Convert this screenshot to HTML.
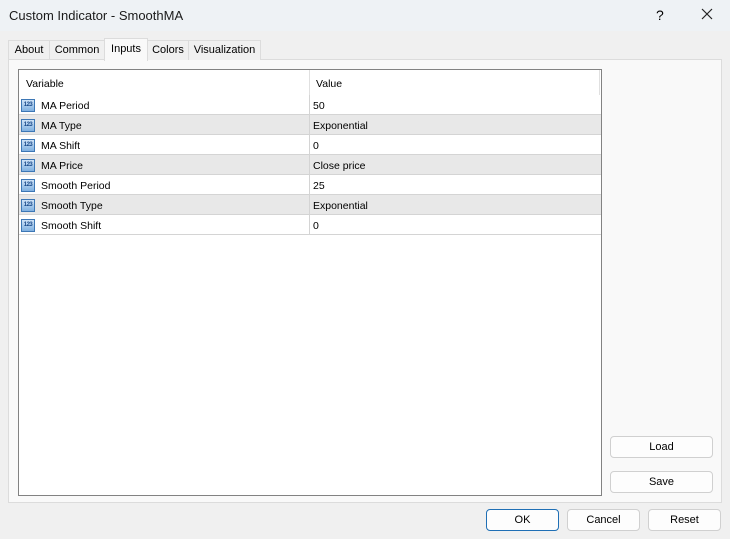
<!DOCTYPE html>
<html><head><style>
body{margin:0;width:730px;height:539px;background:#f0f0f0;font-family:"Liberation Sans",Arial,sans-serif;font-size:11px;color:#000;position:relative;overflow:hidden}
.title{position:absolute;left:0;top:0;width:730px;height:31px;background:#eef2f5;}
.title span{position:absolute;left:9px;top:8px;font-size:13px;color:#1a1a1a}
.q{position:absolute;left:656px;top:7px;font-size:14px}
.x{position:absolute;left:700px;top:7px}
.tab{position:absolute;top:40px;height:19px;background:#f0f0f0;border:1px solid #dcdcdc;border-bottom:none;line-height:19px;text-align:center;font-size:11px}
.panel{position:absolute;left:8px;top:59px;width:714px;height:444px;background:#f9f9f9;border:1px solid #dcdcdc;box-sizing:border-box}
.grid{position:absolute;left:18px;top:69px;width:584px;height:427px;background:#fff;border:1px solid #828282;box-sizing:border-box;font-size:10.5px}
.row{position:absolute;left:0;width:582px;height:20px;border-bottom:1px solid #d4d4d4;box-sizing:border-box}
.row.g{background:#e8e8e8}
.row .n{position:absolute;left:22px;top:5px}
.row .v{position:absolute;left:294px;top:5px}
.row .d{position:absolute;left:290px;top:0;width:1px;height:20px;background:#d4d4d4}
.ic{position:absolute;left:2px;top:4px;width:14px;height:13px;background:linear-gradient(#cfe3f7,#7fb0e0);border:1px solid #3d77b5;box-sizing:border-box;font-size:6px;font-weight:bold;color:#1a4a8a;line-height:11px;text-align:center;letter-spacing:-0.5px}
.btn{position:absolute;height:22px;background:#fdfdfd;border:1px solid #d0d0d0;border-radius:4px;box-sizing:border-box;text-align:center;line-height:21px;font-size:11px}
</style></head><body>
<div class="title"><span>Custom Indicator - SmoothMA</span><div class="q">?</div>
<svg class="x" width="14" height="14" viewBox="0 0 14 14"><path d="M2 2L12 12M12 2L2 12" stroke="#222" stroke-width="1.2"/></svg></div>
<div class="tab" style="left:8px;width:40px">About</div>
<div class="tab" style="left:49px;width:54px">Common</div>
<div class="panel"></div>
<div class="tab" style="left:104px;width:42px;top:38px;height:22px;background:#f9f9f9;line-height:20px">Inputs</div>
<div class="tab" style="left:147px;width:40px">Colors</div>
<div class="tab" style="left:188px;width:71px">Visualization</div>
<div class="grid">
<div class="row" style="top:0;height:25px;border-bottom:none"><span style="position:absolute;left:7px;top:8px">Variable</span><div style="position:absolute;left:290px;top:0;width:1px;height:25px;background:#e0e0e0"></div><span style="position:absolute;left:297px;top:8px">Value</span><div style="position:absolute;left:580px;top:0;width:1px;height:25px;background:#e0e0e0"></div></div>
<div class="row" style="top:25px"><div class="ic">123</div><span class="n">MA Period</span><div class="d"></div><span class="v">50</span></div>
<div class="row g" style="top:45px"><div class="ic">123</div><span class="n">MA Type</span><div class="d"></div><span class="v">Exponential</span></div>
<div class="row" style="top:65px"><div class="ic">123</div><span class="n">MA Shift</span><div class="d"></div><span class="v">0</span></div>
<div class="row g" style="top:85px"><div class="ic">123</div><span class="n">MA Price</span><div class="d"></div><span class="v">Close price</span></div>
<div class="row" style="top:105px"><div class="ic">123</div><span class="n">Smooth Period</span><div class="d"></div><span class="v">25</span></div>
<div class="row g" style="top:125px"><div class="ic">123</div><span class="n">Smooth Type</span><div class="d"></div><span class="v">Exponential</span></div>
<div class="row" style="top:145px"><div class="ic">123</div><span class="n">Smooth Shift</span><div class="d"></div><span class="v">0</span></div>
</div>
<div class="btn" style="left:610px;top:436px;width:103px">Load</div>
<div class="btn" style="left:610px;top:471px;width:103px">Save</div>
<div class="btn" style="left:486px;top:509px;width:73px;border-color:#1f6fb5">OK</div>
<div class="btn" style="left:567px;top:509px;width:73px">Cancel</div>
<div class="btn" style="left:648px;top:509px;width:73px">Reset</div>
</body></html>
